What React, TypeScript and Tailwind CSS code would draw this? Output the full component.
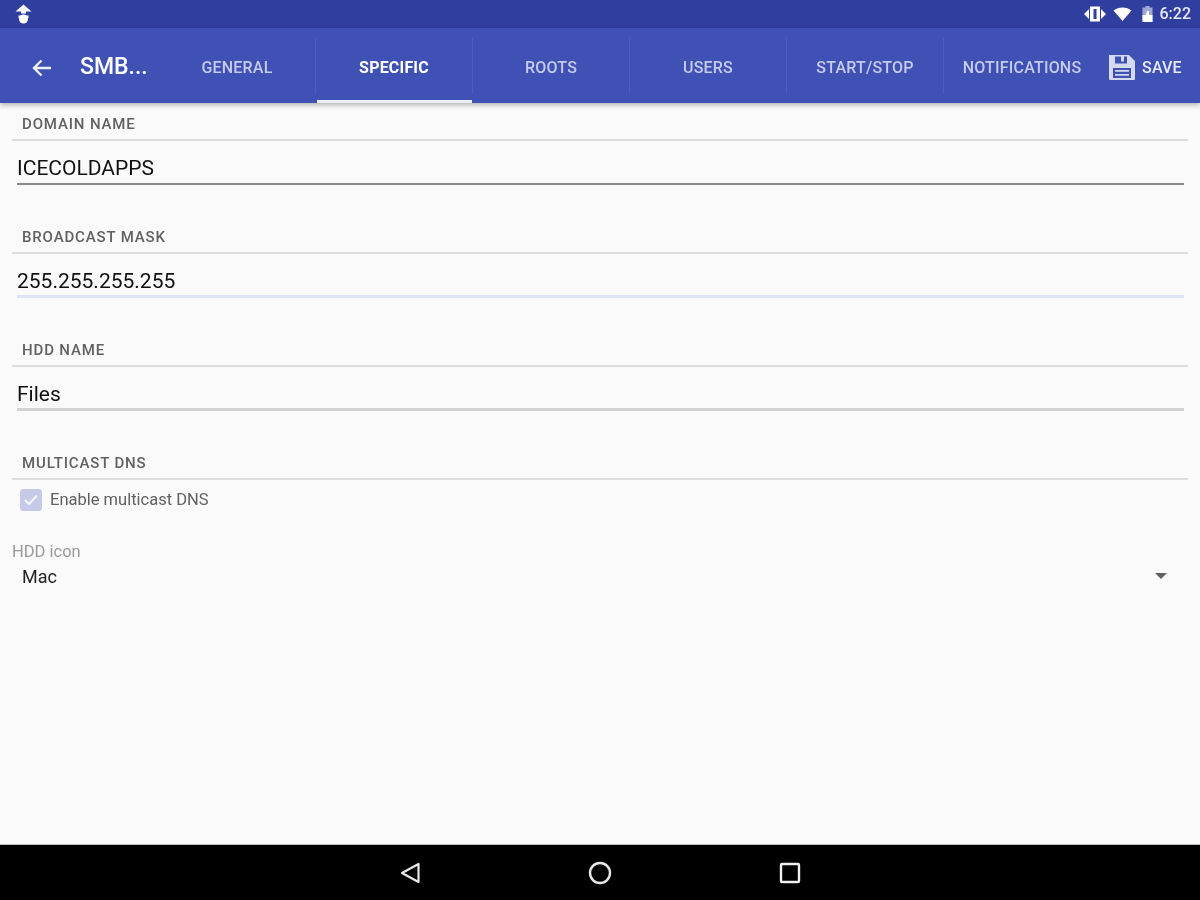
import React from "react";
function Tab({ label, active, last }: { label: string; active?: boolean; last?: boolean }) {
  return (
    <div className="relative w-[157px] h-full flex items-center justify-center shrink-0 pt-[5px] pl-px">
      <span className={active ? "text-[16px] tracking-[0.2px] font-bold text-white" : "text-[16px] tracking-[0.2px] font-medium text-[#c5cae9]"}>{label}</span>
      {!last && <div className="absolute -right-px top-[10px] bottom-[9px] w-px bg-[#4a5cbd]" />}
      {active && <div className="absolute left-[2px] right-0 bottom-0 h-[3px] bg-[#eceef8]" />}
    </div>
  );
}
function Field({ label, value, line }: { label: string; value: string; line: string }) {
  return (
    <div className="mb-[32px]">
      <Header label={label} />
      <div className={`ml-[17px] mr-[16px] mt-[13px] h-[31px] text-[21px] leading-[28px] text-[#111] ${line}`}>{value}</div>
    </div>
  );
}
function Header({ label }: { label: string }) {
  return (
    <div className="mx-[12px] h-[37px] border-b-2 border-[#dcdcdc] pl-[10px] pt-[11px] text-[15px] tracking-[0.85px] leading-[18px] font-medium text-[#616161]">{label}</div>
  );
}
export default function App() {
  return (
    <div className="w-[1200px] h-[900px] flex flex-col bg-[#fafafa] overflow-hidden blur-[0.5px]" style={{ fontFamily: "Roboto, sans-serif" }}>
      <div className="h-[28px] bg-[#303f9f] flex items-center justify-between pl-[14px] pr-[9px] shrink-0">
        <svg width="19" height="20" viewBox="0 0 19 20" fill="white"><path d="M9.500 0.500 L17.500 7.500 H12 V9.500 H7 V7.500 H1.500 Z" /><circle cx="9.500" cy="15" r="4.500" /><path d="M4.500 11.500 H14.500 V14 H4.500Z" /></svg>
        <div className="flex items-center text-white">
          <svg width="24" height="20" viewBox="0 0 24 20" fill="white"><path d="M7 2.500h10v15H7zM10.500 5v10h3V5z" fillRule="evenodd" /><path d="M1 10l5-5v10zM23 10l-5-5v10z" /></svg>
          <svg className="ml-[6px]" width="19" height="16" viewBox="0 0 19 16" fill="white"><path d="M0.500 4.500C5.500 0.500 13.500 0.500 18.500 4.500L9.500 15Z" /></svg>
          <svg className="ml-[9px]" width="13" height="18" viewBox="0 0 13 18" fill="white"><path d="M4.500 1h4v1.500h3V17h-10V2.500h3z" opacity="0.55" /><path d="M1.500 10 L5 10 L6 6 L8 6 L8 10 L11.500 10 V17 H1.500Z" /></svg>
          <span className="ml-[6px] text-[16px] font-medium text-[#e8eaf6]">6:22</span>
        </div>
      </div>
      <div className="relative z-10 h-[75px] bg-[#3f51b5] flex items-center shrink-0 shadow-[0_2px_5px_rgba(0,0,0,0.3)]">
        <div className="w-[158px] flex items-center shrink-0 pt-[4px]">
          <svg className="ml-[31px]" width="22" height="20" viewBox="0 0 22 20" fill="none" stroke="#eceef8" strokeWidth="2.400"><path d="M20 10H3M10.500 2.500L3 10l7.500 7.500" /></svg>
          <span className="ml-[27px] text-[23px] font-medium text-white">SMB...</span>
        </div>
        <div className="flex h-full">
          <Tab label="GENERAL" />
          <Tab label="SPECIFIC" active />
          <Tab label="ROOTS" />
          <Tab label="USERS" />
          <Tab label="START/STOP" />
          <Tab label="NOTIFICATIONS" last />
        </div>
        <div className="flex items-center ml-[8px] pt-[3px]">
          <svg width="28" height="28" viewBox="0 0 28 28" fill="#d5d9f0"><path fillRule="evenodd" d="M1 2h20l6 6v18a1 1 0 0 1-1 1H2a1 1 0 0 1-1-1zM7 3.500v7h12v-7h-3v5h-3v-5zM5 15v10h18V15z" /><path d="M7 17h14v1.800H7zM7 21h14v1.800H7z" /></svg>
          <span className="ml-[6px] mt-[2px] text-[16px] tracking-[0.2px] font-medium text-[#e8eaf6]">SAVE</span>
        </div>
      </div>
      <div className="flex-1 pt-px">
        <Field label="DOMAIN NAME" value="ICECOLDAPPS" line="border-b-2 border-[#8a8a8a]" />
        <Field label="BROADCAST MASK" value="255.255.255.255" line="border-b-[3px] border-[#e0e3f5]" />
        <Field label="HDD NAME" value="Files" line="border-b-[3px] border-[#d2d2d2]" />
        <Header label="MULTICAST DNS" />
        <div className="flex items-center ml-[20px] mt-[8px] h-[24px]">
          <div className="w-[22px] h-[22px] rounded-[3px] bg-[#c5cae9] flex items-center justify-center">
            <svg width="16" height="14" viewBox="0 0 16 14" fill="none" stroke="#f5f5fb" strokeWidth="2"><path d="M2 7l4 4 8-8.500" /></svg>
          </div>
          <span className="ml-[8px] text-[16.5px] text-[#616161]">Enable multicast DNS</span>
        </div>
        <div className="ml-[12px] mt-[31px] text-[16.5px] leading-[18px] text-[#9a9a9a]">HDD icon</div>
        <div className="flex items-center justify-between ml-[22px] mr-[33px] mt-[2px] h-[26px]">
          <span className="text-[18px] text-[#222]">Mac</span>
          <div className="w-0 h-0 border-x-[6px] border-x-transparent border-t-[6px] border-t-[#616161]" />
        </div>
      </div>
      <div className="h-[56px] bg-black flex items-center justify-center shrink-0 border-t border-[#bdbdbd]">
        <div className="flex items-center gap-[167px]">
          <svg width="22" height="24" viewBox="0 0 22 24" fill="none" stroke="#e8e8e8" strokeWidth="2.200" strokeLinejoin="round"><path d="M19.500 3v18L3 12z" /></svg>
          <svg width="24" height="24" viewBox="0 0 24 24" fill="none" stroke="#e8e8e8" strokeWidth="2.400"><circle cx="12" cy="12" r="10" /></svg>
          <svg width="22" height="22" viewBox="0 0 22 22" fill="none" stroke="#f0f0f0" strokeWidth="2.400"><rect x="2" y="2" width="18" height="18" rx="1" /></svg>
        </div>
      </div>
    </div>
  );
}
